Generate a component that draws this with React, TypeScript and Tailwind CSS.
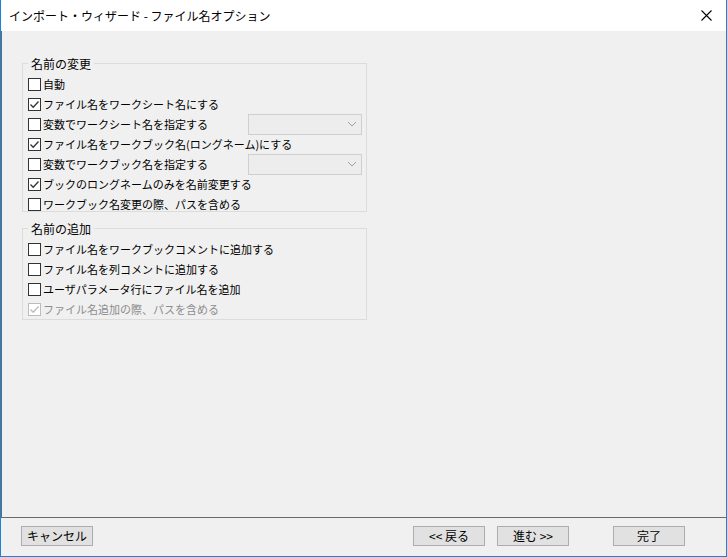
import React from 'react';

const font = { fontFamily: '"Noto Sans CJK JP", sans-serif' };

function Check({ checked, disabled }: { checked?: boolean; disabled?: boolean }) {
    return (
        <span className={`w-[13px] h-[13px] border bg-white flex items-center justify-center shrink-0 ${disabled ? 'border-[#bcbcbc]' : 'border-[#333]'}`}>
            {checked && (
                <svg width="11" height="11" viewBox="0 0 11 11">
                    <path d="M1.5 5.5 L4.2 8.2 L9.5 2.5" fill="none" stroke={disabled ? '#bcbcbc' : '#333'} strokeWidth="1.3" />
                </svg>
            )}
        </span>
    );
}

function Row({ label, checked, disabled, combo }: { label: string; checked?: boolean; disabled?: boolean; combo?: boolean }) {
    return (
        <div className="h-[20px] flex items-center">
            <div className="flex items-center gap-[2px] w-[214px]">
                <Check checked={checked} disabled={disabled} />
                <span className={`text-[11px] whitespace-nowrap ${disabled ? 'text-[#8d8d8d]' : 'text-black'}`}>{label}</span>
            </div>
            {combo && (
                <div className="ml-[6px] w-[114px] h-[21px] border border-[#cfcfcf] bg-[#ededed] flex items-center justify-end pr-[4px]">
                    <svg width="10" height="6" viewBox="0 0 10 6"><path d="M1 1 L5 5 L9 1" fill="none" stroke="#a0a0a0" /></svg>
                </div>
            )}
        </div>
    );
}

function Group({ title, children, h }: { title: string; children: React.ReactNode; h: string }) {
    return (
        <div className={`relative border border-[#dcdcdc] w-[345px] ${h} pl-[5px] pt-[10px]`}>
            <span className="absolute -top-[9px] left-[5px] px-[3px] bg-[#f0f0f0] text-[12px]">{title}</span>
            {children}
        </div>
    );
}

export default function App() {
    return (
        <div style={font} className="w-[727px] h-[557px] bg-[#f0f0f0] border border-[#1883d7] border-t-0 flex flex-col text-black">
            <div className="h-[31px] bg-white flex items-center justify-between pl-[8px] pr-[14px] shrink-0">
                <span className="text-[12px]">インポート・ウィザード - ファイル名オプション</span>
                <svg width="11" height="11" viewBox="0 0 11 11"><path d="M0.5 0.5 L10.5 10.5 M10.5 0.5 L0.5 10.5" stroke="#000" strokeWidth="1.1" /></svg>
            </div>
            <div className="h-[487px] border-l border-b border-[#696969] pl-[20px] pt-[32px] flex flex-col gap-[16px]">
                <Group title="名前の変更" h="h-[149px]">
                    <Row label="自動" />
                    <Row label="ファイル名をワークシート名にする" checked />
                    <Row label="変数でワークシート名を指定する" combo />
                    <Row label="ファイル名をワークブック名(ロングネーム)にする" checked />
                    <Row label="変数でワークブック名を指定する" combo />
                    <Row label="ブックのロングネームのみを名前変更する" checked />
                    <Row label="ワークブック名変更の際、パスを含める" />
                </Group>
                <Group title="名前の追加" h="h-[92px]">
                    <Row label="ファイル名をワークブックコメントに追加する" />
                    <Row label="ファイル名を列コメントに追加する" />
                    <Row label="ユーザパラメータ行にファイル名を追加" />
                    <Row label="ファイル名追加の際、パスを含める" checked disabled />
                </Group>
            </div>
            <div className="flex items-center pt-[8px] pl-[20px] text-[12px]">
                <button className="w-[72px] h-[20px] border border-[#adadad] bg-[#e1e1e1]">キャンセル</button>
                <button className="ml-[320px] w-[72px] h-[20px] border border-[#adadad] bg-[#e1e1e1]">&lt;&lt; 戻る</button>
                <button className="ml-[12px] w-[72px] h-[20px] border border-[#adadad] bg-[#e1e1e1]">進む &gt;&gt;</button>
                <button className="ml-[44px] w-[72px] h-[20px] border border-[#adadad] bg-[#e1e1e1]">完了</button>
            </div>
        </div>
    );
}
